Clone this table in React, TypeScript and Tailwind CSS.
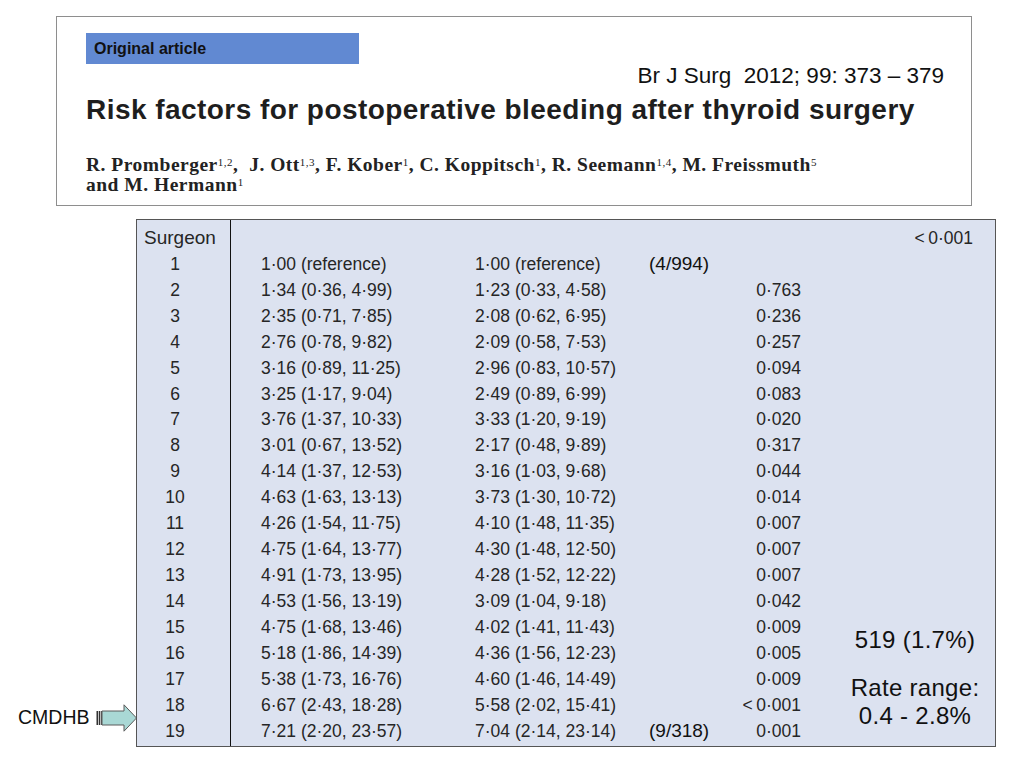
const rows: [string, string, string, string, string?][] = [
  ['1', '1·00 (reference)', '1·00 (reference)', '', '(4/994)'],
  ['2', '1·34 (0·36, 4·99)', '1·23 (0·33, 4·58)', '0·763'],
  ['3', '2·35 (0·71, 7·85)', '2·08 (0·62, 6·95)', '0·236'],
  ['4', '2·76 (0·78, 9·82)', '2·09 (0·58, 7·53)', '0·257'],
  ['5', '3·16 (0·89, 11·25)', '2·96 (0·83, 10·57)', '0·094'],
  ['6', '3·25 (1·17, 9·04)', '2·49 (0·89, 6·99)', '0·083'],
  ['7', '3·76 (1·37, 10·33)', '3·33 (1·20, 9·19)', '0·020'],
  ['8', '3·01 (0·67, 13·52)', '2·17 (0·48, 9·89)', '0·317'],
  ['9', '4·14 (1·37, 12·53)', '3·16 (1·03, 9·68)', '0·044'],
  ['10', '4·63 (1·63, 13·13)', '3·73 (1·30, 10·72)', '0·014'],
  ['11', '4·26 (1·54, 11·75)', '4·10 (1·48, 11·35)', '0·007'],
  ['12', '4·75 (1·64, 13·77)', '4·30 (1·48, 12·50)', '0·007'],
  ['13', '4·91 (1·73, 13·95)', '4·28 (1·52, 12·22)', '0·007'],
  ['14', '4·53 (1·56, 13·19)', '3·09 (1·04, 9·18)', '0·042'],
  ['15', '4·75 (1·68, 13·46)', '4·02 (1·41, 11·43)', '0·009'],
  ['16', '5·18 (1·86, 14·39)', '4·36 (1·56, 12·23)', '0·005'],
  ['17', '5·38 (1·73, 16·76)', '4·60 (1·46, 14·49)', '0·009'],
  ['18', '6·67 (2·43, 18·28)', '5·58 (2·02, 15·41)', '<\u20090·001'],
  ['19', '7·21 (2·20, 23·57)', '7·04 (2·14, 23·14)', '0·001', '(9/318)'],
];

function Arrow() {
  return (
    <svg width="42" height="28" viewBox="0 0 42 28" className="shrink-0">
      <path d="M6 7 H28 V0.8 L40.5 14 L28 27.2 V21 H6 Z" fill="#a9d8d5" stroke="#5a5a5a" strokeWidth="1" />
      <rect x="0.5" y="7" width="1.6" height="14" fill="#333" />
      <rect x="2.8" y="7" width="1.4" height="14" fill="#333" />
      <rect x="4.8" y="7" width="1.2" height="14" fill="#555" />
    </svg>
  );
}

export default function App() {
  const sup = 'text-[11px] font-normal';
  return (
    <div className="h-[768px] w-[1024px] overflow-hidden bg-white pt-[16px] font-['Liberation_Sans',Arial,sans-serif]">
      {/* article header */}
      <div className="ml-[56px] h-[190px] w-[916px] border border-[#8e8e8e] bg-white">
        <div className="ml-[29px] mt-[16px] flex h-[31px] w-[273px] items-center bg-[#6189d2] pl-[8px]">
          <span className="text-[16px] font-bold leading-none text-[#111]">Original article</span>
        </div>
        <div className="pr-[27px] text-right text-[22.5px] leading-[24px] text-[#111]">
          Br J Surg&nbsp; 2012; 99: 373 – 379
        </div>
        <h1 className="ml-[29px] mt-[6px] text-[28px] font-bold leading-[32px] tracking-[0.45px] text-[#1e1e1e]">
          Risk factors for postoperative bleeding after thyroid surgery
        </h1>
        <p className="ml-[29px] mt-[29px] font-['Liberation_Serif','Times_New_Roman',serif] text-[19.5px] font-bold leading-[20px] tracking-[0.5px] text-[#222]">
          R. Promberger<sup className={sup}>1,2</sup>,&nbsp; J. Ott<sup className={sup}>1,3</sup>, F. Kober
          <sup className={sup}>1</sup>, C. Koppitsch<sup className={sup}>1</sup>, R. Seemann
          <sup className={sup}>1,4</sup>, M. Freissmuth<sup className={sup}>5</sup>
          <br />
          and M. Hermann<sup className={sup}>1</sup>
        </p>
      </div>

      <div className="mt-[13px] flex">
        {/* CMDHB pointer */}
        <div className="flex h-[528px] w-[138px] flex-col justify-end pb-[16px]">
          <div className="flex h-[26px] items-center">
            <span className="ml-[18px] w-[82px] text-[19.5px] leading-none text-[#111]">CMDHB</span>
            <Arrow />
          </div>
        </div>

        {/* table */}
        <div className="-ml-[2px] flex h-[528px] w-[860px] border border-[#555] bg-[#dce2f0] text-[17.5px] text-[#262626]">
          <div className="w-[94px] shrink-0 border-r border-[#111] pt-[5px]">
            <div className="flex h-[26px] items-center pl-[7px] text-[19px]">Surgeon</div>
            {rows.map((r) => (
              <div key={r[0]} className="flex h-[25.94px] w-[76px] items-center justify-center">
                {r[0]}
              </div>
            ))}
          </div>

          <div className="flex flex-1 flex-col pt-[5px]">
            <div className="flex h-[26px] items-center justify-end pr-[22px]">{'<\u20090·001'}</div>
            <div className="flex flex-1">
              <div>
                {rows.map((r) => (
                  <div key={r[0]} className="flex h-[25.94px] items-center">
                    <div className="w-[244px] pl-[30px]">{r[1]}</div>
                    <div className="w-[174px]">{r[2]}</div>
                    <div className="flex w-[152px] items-center justify-between">
                      <span className="text-[19px] text-[#111]">{r[4] ?? ''}</span>
                      <span>{r[3]}</span>
                    </div>
                  </div>
                ))}
              </div>
              <div className="flex flex-1 flex-col justify-end pb-[16px] pl-[34px] text-center text-[24px] leading-[28px] tracking-[0.3px] text-[#111]">
                <div className="mb-[20px]">519 (1.7%)</div>
                <div>Rate range:</div>
                <div>0.4 - 2.8%</div>
              </div>
            </div>
          </div>
        </div>
      </div>
    </div>
  );
}
